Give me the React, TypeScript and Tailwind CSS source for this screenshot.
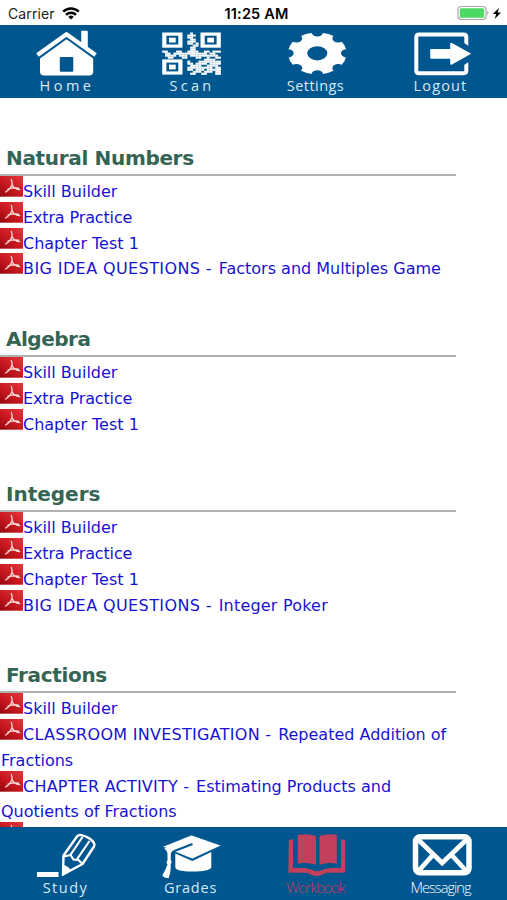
import React from "react";

const BLUE = "#00568f";
const ROSE = "#c2405c";

const QR = [
  "          1          ",
  "         111         ",
  "         11          ",
  "          11         ",
  "         111         ",
  "         11 1        ",
  "           11        ",
  "          11         ",
  "          11         ",
  "11   11  1111  11 111",
  " 11 111111111111 11  ",
  " 1111 111 1111111111 ",
  "  11   11   11  1  11",
  "               1111  ",
  "         1   11111111",
  "         11 1111 1111",
  "          1111  1111 ",
  "         111111111 11",
  "         11 111 11111",
  "           111 111 11",
  "          11  11   11",
];

function PdfIcon() {
  return (
    <svg className="-mt-[8px] mb-[-1px] inline-block h-[21px] w-[23px] shrink-0 align-baseline" viewBox="0 0 23 21">
      <defs>
        <linearGradient id="pdf" x1="0" y1="1" x2="0.8" y2="0">
          <stop offset="0" stopColor="#94080f" />
          <stop offset="0.5" stopColor="#c9181f" />
          <stop offset="1" stopColor="#dc3339" />
        </linearGradient>
      </defs>
      <rect width="23" height="20.700" fill="url(#pdf)" />
      <path d="M11.300 3.500q1.200 2.500.6 5.300-1.600 4.500-6.300 7.200M12 8.500q1.600 3.600 4.500 4.500l3.200.6M8 13.200q4-1.700 10.500-1.100" fill="none" stroke="#fbdcdc" strokeWidth="1.300" strokeLinecap="round" />
    </svg>
  );
}

type Part = [text: string, cls?: string];
type Line = { parts: Part[]; cont?: boolean };

function Section({ title, cls, lines }: { title: string; cls: string; lines: Line[] }) {
  return (
    <section>
      <h2 className={"flex h-[73px] items-end pb-[3px] pl-[6px] text-[20px] leading-[26px] font-bold text-[#346454] " + cls}>{title}</h2>
      <div className="h-[2px] w-[456px] bg-[#adb1af]" />
      <div className="pt-[3px]">
        {lines.map((l, i) => (
          <div key={i} className="flex h-[25.75px] items-baseline text-[16px] leading-[25.75px] whitespace-pre text-[#1712d2]">
            {l.cont ? <span className="w-px" /> : <PdfIcon />}
            <a>{l.parts.map(([t, c]) => <span key={t} className={c}>{t}</span>)}</a>
          </div>
        ))}
      </div>
    </section>
  );
}

function Tab({ label, cls, box, children }: { label: string; cls: string; box: string; children: React.ReactNode }) {
  return (
    <div className="flex flex-1 flex-col items-center">
      <svg className="h-[51px] w-[70px] shrink-0" viewBox={box}>{children}</svg>
      <span className={"h-[20px] font-['Open_Sans',sans-serif] text-[14.5px] leading-[20px] whitespace-nowrap " + cls}>{label}</span>
    </div>
  );
}

function Finder({ x, y }: { x: number; y: number }) {
  return (
    <g>
      <rect x={x} y={y} width="20.300" height="15.200" fill="#fff" />
      <rect x={x + 4.2} y={y + 3.2} width="11.900" height="8.800" fill={BLUE} />
      <rect x={x + 6.8} y={y + 5.200} width="6.700" height="4.800" fill="#fff" />
    </g>
  );
}

const common: Line[] = [
  { parts: [["Skill Builder"]] },
  { parts: [["Extra Practice", "tracking-[-0.14px]"]] },
  { parts: [["Chapter Test 1"]] },
];

export default function App() {
  return (
    <div className="flex h-[900px] w-[507px] flex-col overflow-hidden bg-white font-['DejaVu_Sans',Verdana,sans-serif]">
      <div className="grid h-[25px] shrink-0 grid-cols-3 items-center pt-[3px] font-['Inter',sans-serif] text-[14px] leading-[20px] text-[#222]">
        <div className="flex items-center gap-[7px] pl-[8px]">
          <span className="tracking-[0.1px]">Carrier</span>
          <svg className="mb-[2px] h-[13px] w-[18px]" viewBox="0 0 18 13" fill="none" stroke="#000" strokeWidth="2.500">
            <path d="M1.200 4.700a11.200 11.200 0 0 1 15.600 0M4 7.800a7.200 7.200 0 0 1 10 0" />
            <path d="M9 12.500L6.300 9.900a3.900 3.900 0 0 1 5.400 0z" fill="#000" stroke="none" />
          </svg>
        </div>
        <div className="pl-[6px] text-center text-[14.5px] font-semibold tracking-[0.2px] whitespace-nowrap text-black">11:25 AM</div>
        <div className="flex items-center justify-end pr-[5px] pb-[3px]">
          <svg className="h-[16px] w-[45px]" viewBox="0 0 45 16">
            <rect x="1" y="1.500" width="28" height="13" rx="3.400" fill="#fff" stroke="#a8a8a8" strokeWidth="1.200" />
            <rect x="2.800" y="3.300" width="24.400" height="9.400" rx="1.500" fill="#4cd964" />
            <path d="M30.300 5.600q2.200 2.400 0 4.800z" fill="#999" />
            <path d="M42.300 2.700L35.800 9h3.400L37.700 14 44 7.600h-3.500z" fill="#000" />
          </svg>
        </div>
      </div>

      <nav className="flex h-[73px] shrink-0 bg-[#00568f] pr-[4px] pl-[3px] text-[#dbe9f5]">
        <Tab label="Home" cls="pl-[3px] tracking-[3.500px]" box="30.5 25 70 51">
          <path d="M80.700 31.500q0-.7.7-.7h5.200q.7 0 .7.700v17l-6.600-5z" fill="#fff" />
          <path d="M37 55L66 34.200l29 20.800" fill="none" stroke="#fff" strokeWidth="4.200" strokeLinejoin="round" />
          <path d="M66 39.300L92.700 58.500V71.500q0 4-4 4H43.500q-4 0-4-4V58.500z" fill="#fff" />
          <rect x="59.300" y="57" width="13.500" height="14.800" rx="1" fill={BLUE} />
        </Tab>
        <Tab label="Scan" cls="pl-[3px] tracking-[3.300px]" box="155.5 25 70 51">
          <Finder x={161.7} y={32.500} />
          <Finder x={200} y={32.500} />
          <Finder x={161.7} y={59.400} />
          {QR.flatMap((row, y) =>
            row.split("").map((c, x) =>
              c === "1" ? <rect key={x + "-" + y} x={161.7 + x * 2.790} y={32.500 + y * 2.010} width="2.900" height="2.100" fill="#fff" /> : null
            )
          )}
        </Tab>
        <Tab label="Settings" cls="tracking-[0.450px]" box="280.5 25 70 51">
          <g transform="translate(316.800 53.300) scale(1 0.714)">
            <circle r="29.300" fill="#fff" />
            {[0, 45, 90, 135, 180, 225, 270, 315].map((a) => (
              <circle key={a} cx="29.500" r="5.800" fill={BLUE} transform={`rotate(${a})`} />
            ))}
            <circle r="10" fill={BLUE} />
          </g>
        </Tab>
        <Tab label="Logout" cls="tracking-[1.150px]" box="405.5 25 70 51">
          <path d="M465.800 46V37q0-2.600-2.600-2.600H418.500q-2.700 0-2.700 2.700V70.500q0 2.700 2.700 2.700h44.700q2.600 0 2.600-2.600V61.500" fill="none" stroke="#fff" strokeWidth="4" />
          <path d="M462 42l7 4.500v3h-7zM462 66l7-4.500v-3h-7z" fill={BLUE} />
          <path d="M430.700 48.900h19v-4.700q0-2.500 2.200-1l18.800 10.500-18.800 10.600q-2.200 1.400-2.200-1v-4.500h-19q-1 0-1-1v-7.900q0-1 1-1z" fill="#fff" />
        </Tab>
      </nav>

      <main className="min-h-0 flex-1 overflow-hidden pt-[3px]">
        <Section title="Natural Numbers" cls="tracking-[-0.330px]" lines={[...common, { parts: [["BIG IDEA QUESTIONS ", "tracking-[0.400px]"], ["- ", "tracking-[1px]"], ["Factors and Multiples Game"]] }]} />
        <Section title="Algebra" cls="tracking-[-0.500px]" lines={common} />
        <Section title="Integers" cls="tracking-normal" lines={[...common, { parts: [["BIG IDEA QUESTIONS ", "tracking-[0.400px]"], ["- ", "tracking-[1px]"], ["Integer Poker", "tracking-[0.200px]"]] }]} />
        <Section title="Fractions" cls="tracking-[-0.330px]" lines={[
          { parts: [["Skill Builder"]] },
          { parts: [["CLASSROOM INVESTIGATION ", "tracking-[0.280px]"], ["- ", "tracking-[1px]"], ["Repeated Addition of"]] },
          { parts: [["Fractions"]], cont: true },
          { parts: [["CHAPTER ACTIVITY ", "tracking-[0.220px]"], ["- ", "tracking-[1px]"], ["Estimating Products and"]] },
          { parts: [["Quotients of Fractions"]], cont: true },
          { parts: [["\u00a0"]] },
        ]} />
      </main>

      <nav className="flex h-[73px] shrink-0 bg-[#00568f] pr-[4px] pl-[3px] text-[#dbe9f5]">
        <Tab label="Study" cls="tracking-[1.500px]" box="30.5 827 70 51">
          <rect x="36.500" y="872" width="21.500" height="5" fill="#fff" />
          <path d="M62.500 874.500L63 855.500 76.500 836.500Q78 834.500 81 835.200 90 837.500 93.500 843 94.500 845 93.500 846.500L82 864z" fill={BLUE} stroke="#fff" strokeWidth="2.400" strokeLinejoin="round" />
          <path d="M63.500 856.500l6.500-1.500 3 4.500 5 .5 4 4M69.500 855.500L82 837M76 860L89 841" fill="none" stroke="#fff" strokeWidth="2.200" />
          <path d="M61.300 876.300l.7-11.300q6 .5 8.500 6z" fill="#fff" />
        </Tab>
        <Tab label="Grades" cls="tracking-[0.800px]" box="155.5 827 70 51">
          <path d="M174.800 853.500l17 7.500 19-9v15.500q-2 4-19 4t-17-4.500z" fill="#fff" />
          <path d="M161.700 846.700L191 835l30 10.500-29.200 13.500z" fill="#fff" stroke={BLUE} strokeWidth="0.800" />
          <path d="M192 844l-18 7q-3.500 2-3 7v5" fill="none" stroke={BLUE} strokeWidth="2.200" />
          <path d="M163.500 848.500q3.500 2 3.500 6v6q-1.800 2 0 3.800-2 6-5.200 11.200 2.200 3 6.500 2.500 2.500-7 1.800-14 1.800-2 .2-4v-5.500q0-3 3-4.500l-5-2.500z" fill="#fff" />
        </Tab>
        <Tab label="Workbook" cls="tracking-[-1.050px] font-light text-[#c2405c]" box="280.5 827 70 51">
          <path d="M297.300 834.700q10-1.500 17.500 1 .7.300.7 1v28q-8-2.500-17.200-1.200-1 .1-1-1zM336.300 834.700q-9-1.500-16.600 1-.7.300-.7 1v28q7.500-2.500 16.300-1.200 1 .1 1-1z" fill={ROSE} />
          <path d="M288.300 840.500q0-1 1-1h3.200v28.500q12-1 18.500 1.500 1.500 1.800 5.600 1.800t5.600-1.800q6.500-2.500 18.300-1.500v-28.500h3.200q1 0 1 1v31q0 1.200-1.200 1.200h-16q-3 0-5.500 1.800-5.800 3-11.500 0-2.500-1.800-5.500-1.800h-16q-1.200 0-1.200-1.200z" fill={ROSE} />
        </Tab>
        <Tab label="Messaging" cls="tracking-[-0.950px] font-light text-white" box="405.5 827 70 51">
          <rect x="415" y="836.800" width="53.500" height="36" rx="4.500" fill={BLUE} stroke="#fff" strokeWidth="5.500" />
          <path d="M417 839l24.700 24 25-24M417 872l14.500-16M466.700 872L452 856" fill="none" stroke="#fff" strokeWidth="4.800" />
        </Tab>
      </nav>
    </div>
  );
}
